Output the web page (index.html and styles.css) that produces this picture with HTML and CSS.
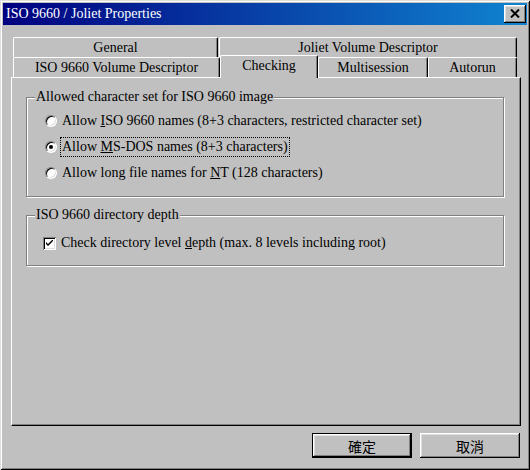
FILE: index.html
```html
<!DOCTYPE html>
<html lang="en">
<head>
    <meta charset="UTF-8">
    <title>ISO 9660 / Joliet Properties</title>
    <link rel="stylesheet" href="styles.css">
</head>
<body>
    <div class="window">
        <div class="titlebar">
            <span class="title">ISO 9660 / Joliet Properties</span>
            <button class="close-btn">
                <svg width="10" height="9" viewBox="0 0 10 9">
                    <path d="M1 0.5 L9 8.5 M9 0.5 L1 8.5" stroke="#000" stroke-width="2" fill="none"/>
                </svg>
            </button>
        </div>

        <div class="content">
            <div class="tabs">
                <div class="tab-row">
                    <div class="tab w-general">General</div>
                    <div class="tab w-joliet">Joliet Volume Descriptor</div>
                </div>
                <div class="tab-row">
                    <div class="tab w-iso">ISO 9660 Volume Descriptor</div>
                    <div class="tab w-checking active">Checking</div>
                    <div class="tab w-multi">Multisession</div>
                    <div class="tab w-autorun">Autorun</div>
                </div>
            </div>

            <div class="panel">
                <div class="group group-charset">
                    <div class="group-title">Allowed character set for ISO 9660 image</div>
                    <div class="option-list">
                        <div class="option">
                            <span class="radio"></span>
                            <span class="label">Allow <u>I</u>SO 9660 names (8+3 characters, restricted character set)</span>
                        </div>
                        <div class="option">
                            <span class="radio checked"></span>
                            <span class="label focused">Allow <u>M</u>S-DOS names (8+3 characters)</span>
                        </div>
                        <div class="option">
                            <span class="radio"></span>
                            <span class="label">Allow long file names for <u>N</u>T (128 characters)</span>
                        </div>
                    </div>
                </div>

                <div class="group group-depth">
                    <div class="group-title">ISO 9660 directory depth</div>
                    <div class="option-list">
                        <div class="option check-option">
                            <span class="checkbox">
                                <svg width="7" height="7" viewBox="0 0 7 7">
                                    <path d="M0 2 L0 4 L2 6 L7 1 L7 -1 L2 4 Z" fill="#000"/>
                                </svg>
                            </span>
                            <span class="label">Check directory level <u>d</u>epth (max. 8 levels including root)</span>
                        </div>
                    </div>
                </div>
            </div>

            <div class="buttons">
                <button class="btn default">確定</button>
                <button class="btn">取消</button>
            </div>
        </div>
    </div>
</body>
</html>
```

FILE: styles.css
```css
body {
    margin: 0;
    padding: 0;
    background: #c0c0c0;
    font-family: 'Liberation Serif', 'Times New Roman', serif;
    font-size: 14px;
    color: #000;
}
.window {
    width: 530px;
    height: 470px;
    box-sizing: border-box;
    padding: 3px;
    background: #c0c0c0;
    box-shadow: inset 1px 1px #dfdfdf, inset -1px -1px #000, inset 2px 2px #fff, inset -2px -2px #808080;
    display: flex;
    flex-direction: column;
}
.titlebar {
    height: 22px;
    background: linear-gradient(to right, #000080, #1084d0);
    color: #fff;
    display: flex;
    align-items: center;
    justify-content: space-between;
    padding: 0 1px 0 3px;
}
.title {
    font-size: 14px;
    white-space: nowrap;
}
.close-btn {
    width: 22px;
    height: 18px;
    padding: 0;
    border: none;
    background: #c0c0c0;
    box-shadow: inset -1px -1px #000, inset 1px 1px #fff, inset -2px -2px #808080, inset 2px 2px #dfdfdf;
    display: flex;
    align-items: center;
    justify-content: center;
}
.close-btn svg {
    display: block;
    margin-top: -1px;
}
.content {
    padding: 12px 6px 0 8px;
    display: flex;
    flex-direction: column;
}
.tabs {
    margin-left: 2px;
}
.tab-row {
    display: flex;
    height: 20px;
    align-items: flex-start;
}
.tab-row:first-child {
    gap: 1px;
}
.tab {
    box-sizing: border-box;
    height: 20px;
    line-height: 19px;
    text-align: center;
    white-space: nowrap;
    background: #c0c0c0;
    border-top: 1px solid #fff;
    border-left: 1px solid #fff;
    border-right: 1px solid #000;
    border-radius: 2px 2px 0 0;
    box-shadow: inset -1px 0 #808080;
}
.w-general { width: 205px; }
.w-joliet { width: 298px; }
.w-iso { width: 207px; }
.w-checking { width: 98px; }
.w-multi { width: 110px; }
.w-autorun { width: 89px; }
.tab.active {
    position: relative;
    z-index: 1;
    height: 23px;
    margin-top: -2px;
    line-height: 20px;
}
.panel {
    box-sizing: border-box;
    width: 510px;
    height: 349px;
    border-top: 1px solid #fff;
    border-left: 1px solid #fff;
    border-right: 1px solid #000;
    border-bottom: 1px solid #000;
    box-shadow: inset -1px -1px #808080;
    padding: 19px 15px 0 14px;
    display: flex;
    flex-direction: column;
    gap: 18px;
}
.group {
    border: 1px solid #808080;
    box-shadow: inset 1px 1px #fff, 1px 1px #fff;
    width: 478px;
    box-sizing: border-box;
}
.group-charset {
    height: 100px;
}
.group-depth {
    height: 51px;
}
.group-title {
    width: fit-content;
    margin: -9px 0 0 8px;
    padding: 0 1px;
    background: #c0c0c0;
    line-height: 16px;
    white-space: nowrap;
}
.option-list {
    display: flex;
    flex-direction: column;
    gap: 6px;
    padding: 6px 0 0 18px;
}
.option {
    display: flex;
    align-items: center;
    height: 20px;
    white-space: nowrap;
}
.label {
    padding: 0 1px;
    border: 1px dotted transparent;
    line-height: 18px;
}
.label.focused {
    border-color: #000;
}
.radio {
    box-sizing: border-box;
    width: 12px;
    height: 12px;
    border-radius: 50%;
    background: #fff;
    border: 1px solid;
    border-color: #808080 #fff #fff #808080;
    box-shadow: inset 1px 1px #000, inset -1px -1px #dfdfdf;
    margin-right: 3px;
    display: flex;
    align-items: center;
    justify-content: center;
}
.radio.checked::after {
    content: "";
    width: 4px;
    height: 4px;
    border-radius: 50%;
    background: #000;
}
.group-depth .option-list {
    padding: 10px 0 0 16px;
}
.checkbox {
    box-sizing: border-box;
    width: 13px;
    height: 13px;
    background: #fff;
    box-shadow: inset 1px 1px #808080, inset -1px -1px #fff, inset 2px 2px #000, inset -2px -2px #dfdfdf;
    margin-right: 3px;
    display: flex;
    align-items: center;
    justify-content: center;
}
.checkbox svg {
    display: block;
}
.buttons {
    display: flex;
    justify-content: flex-end;
    gap: 8px;
    margin-top: 7px;
    padding-right: 1px;
}
.btn {
    box-sizing: border-box;
    width: 100px;
    height: 25px;
    padding: 0;
    border: none;
    background: #c0c0c0;
    font-family: 'Noto Sans CJK TC', 'Noto Sans CJK SC', sans-serif;
    font-size: 14px;
    color: #000;
    box-shadow: inset -1px -1px #000, inset 1px 1px #fff, inset -2px -2px #808080, inset 2px 2px #dfdfdf;
}
.btn.default {
    border: 1px solid #000;
}
```
